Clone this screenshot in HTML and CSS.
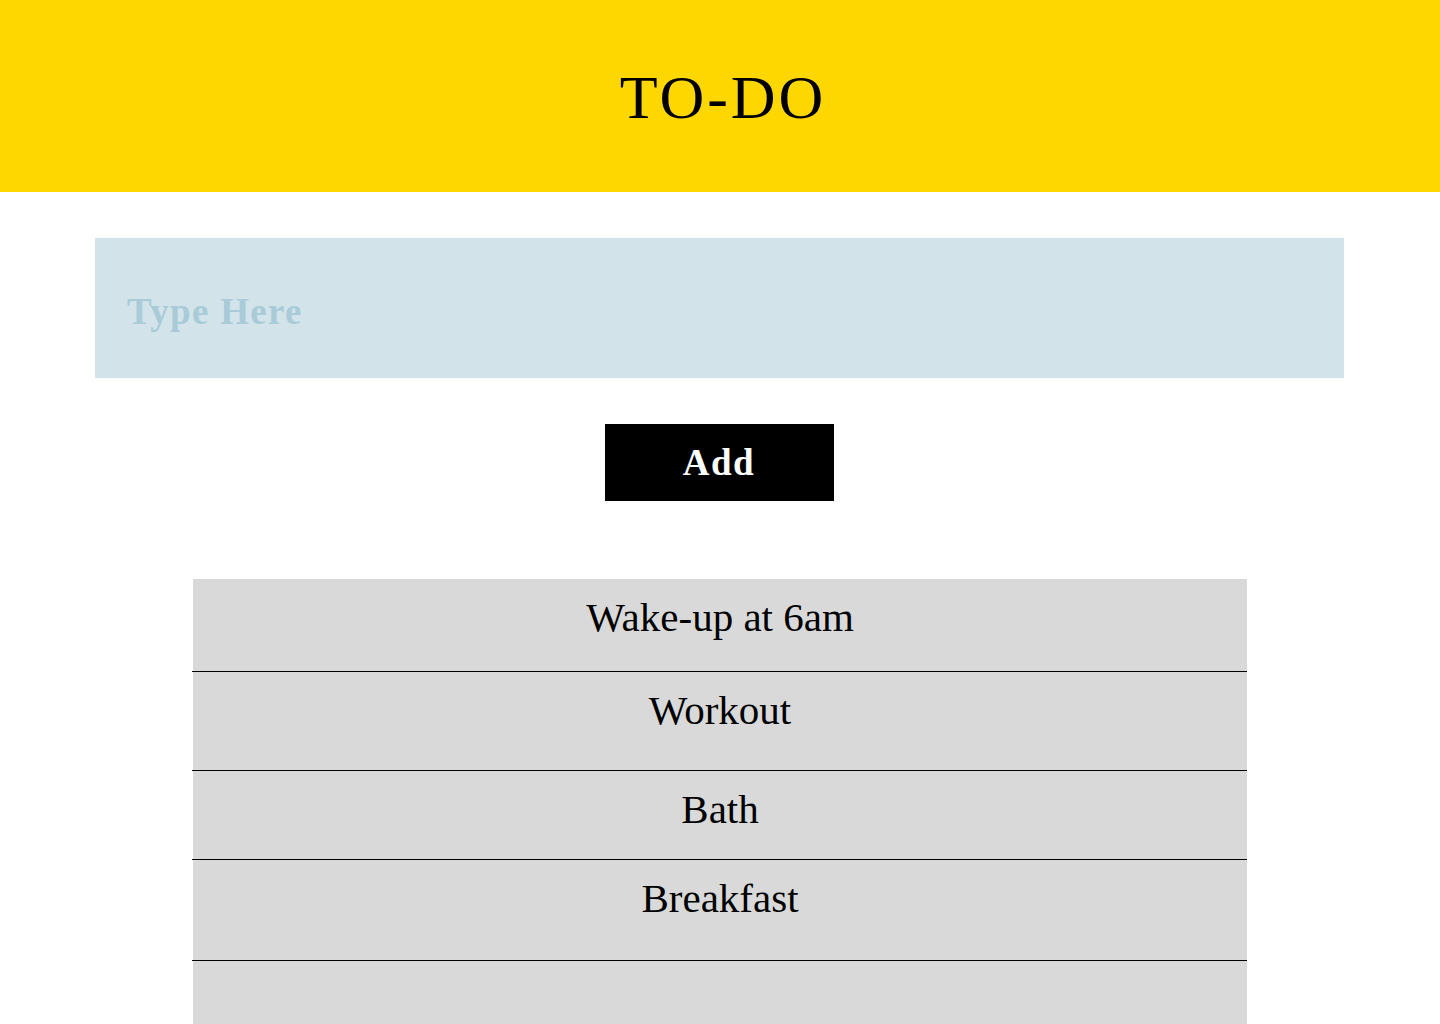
FILE: index.html
```html
<!DOCTYPE html>
<html lang="en">
<head>
<meta charset="utf-8">
<title>TO-DO</title>
<link rel="stylesheet" href="styles.css">
</head>
<body>
<header class="header">
  <h1 class="title">TO-DO</h1>
</header>
<main class="main">
  <input class="task-input" type="text" placeholder="Type Here">
  <div class="actions">
    <button class="add-btn" type="button">Add</button>
  </div>
  <ul class="list">
    <li class="item item-1">Wake-up at 6am</li>
    <li class="item item-2">Workout</li>
    <li class="item item-3">Bath</li>
    <li class="item item-4">Breakfast</li>
    <li class="item item-5"></li>
  </ul>
</main>
</body>
</html>
```
FILE: styles.css
```css
* { box-sizing: border-box; }
html, body { margin: 0; padding: 0; }
body {
  font-family: "Liberation Serif", "DejaVu Serif", serif;
  background: #ffffff;
  color: #000;
  overflow: hidden;
  height: 1024px;
}
.header {
  background: #FFD700;
  height: 192px;
  display: flex;
  align-items: center;
  justify-content: center;
}
.title {
  margin: 0;
  font-size: 62px;
  font-weight: 400;
  letter-spacing: 3px;
  line-height: 1;
  padding-top: 2px;
  padding-left: 6px;
}
.main {
  padding: 46px 96px 0 95px;
}
.task-input {
  display: block;
  width: 100%;
  height: 140px;
  border: none;
  outline: none;
  background: #D3E3EA;
  padding: 6px 32px 0;
  font-family: "Liberation Serif", "DejaVu Serif", serif;
  font-size: 37px;
  font-weight: 700;
  letter-spacing: 1.3px;
  color: #000;
}
.task-input::placeholder {
  color: #A9CBD8;
  opacity: 1;
}
.actions {
  display: flex;
  justify-content: center;
  margin-top: 46px;
  padding-right: 1px;
}
.add-btn {
  width: 229px;
  height: 77px;
  background: #000;
  color: #fff;
  border: none;
  font-family: "Liberation Serif", "DejaVu Serif", serif;
  font-size: 37px;
  font-weight: 700;
  letter-spacing: 1.5px;
  padding: 0;
}
.list {
  list-style: none;
  margin: 78px 0 0;
  padding: 0 97px 0 98px;
}
.item {
  position: relative;
  background: #D9D9D9;
  text-align: center;
  font-size: 41px;
  line-height: 1;
  padding-top: 18px;
  border-bottom: 1px solid #000;
}
.item::after {
  content: "";
  position: absolute;
  left: -1px;
  bottom: -1px;
  width: 1px;
  height: 1px;
  background: #000;
}
.item-1 { height: 93px; }
.item-2 { height: 99px; }
.item-3 { height: 89px; }
.item-4 { height: 101px; }
.item-5 { height: 120px; border-bottom: none; }
.item-5::after { display: none; }
```
